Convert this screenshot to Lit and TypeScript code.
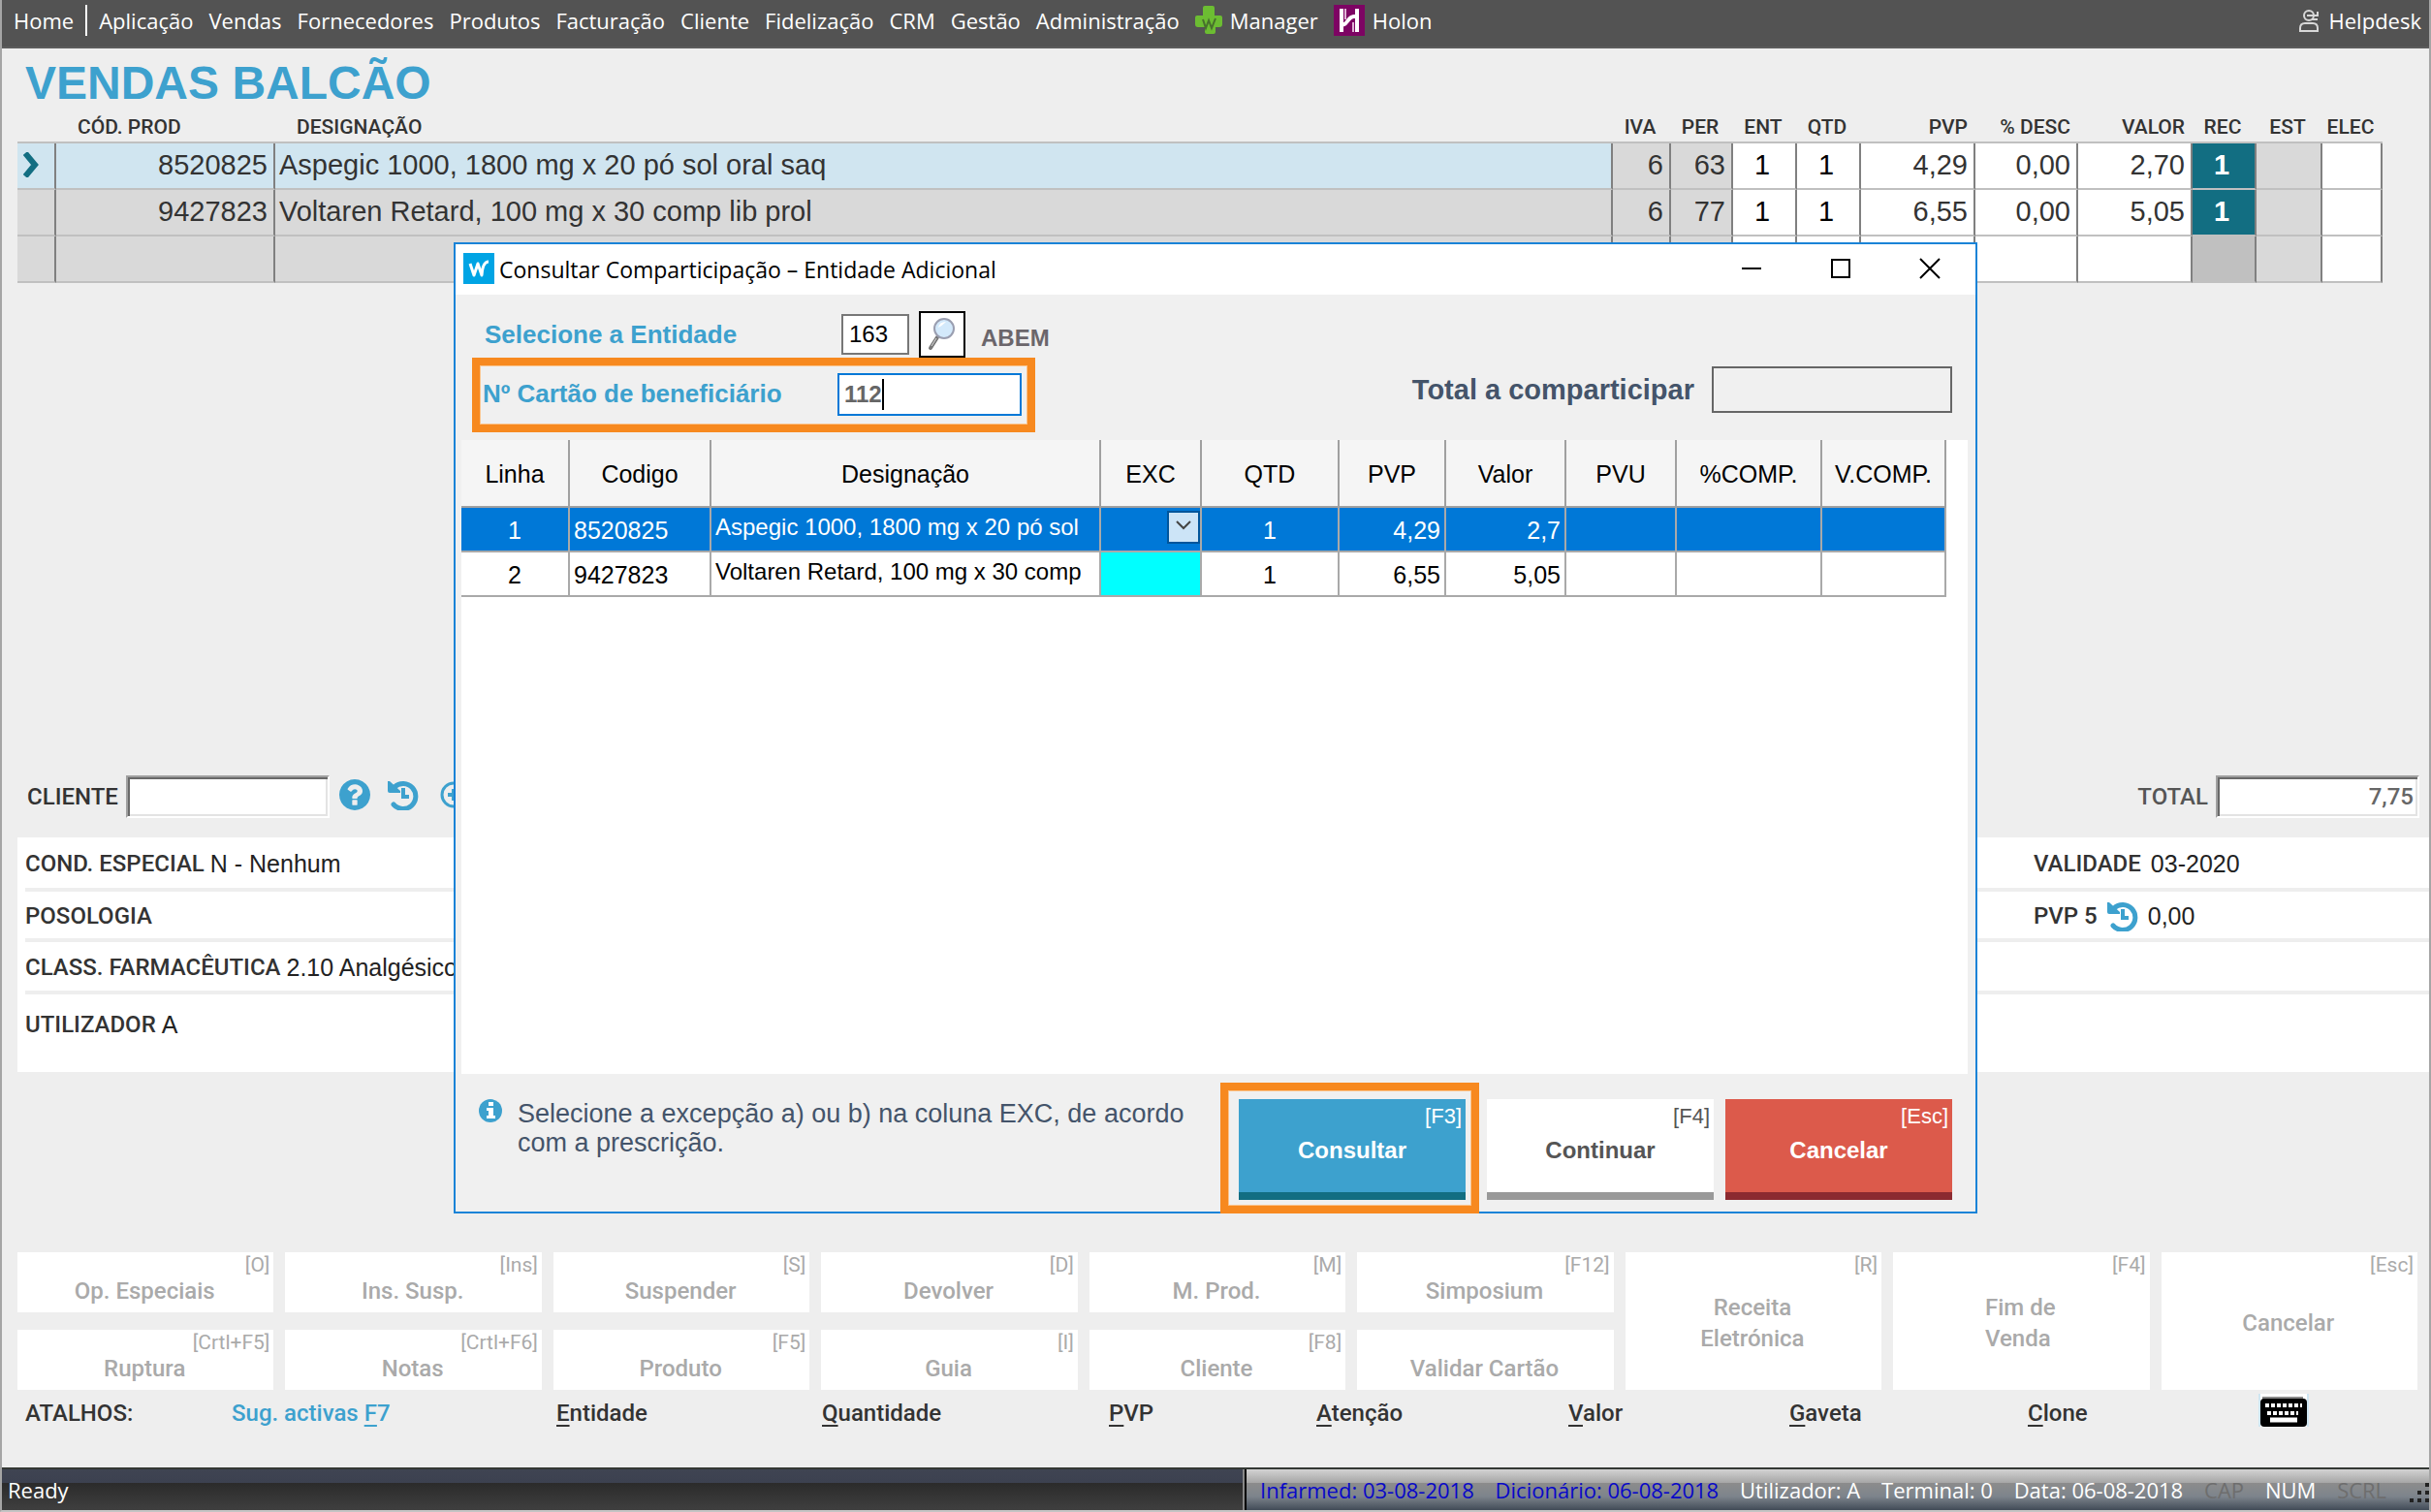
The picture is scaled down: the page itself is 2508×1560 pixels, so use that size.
import { LitElement, html, css, svg, nothing } from "lit";
import { customElement, state } from "lit/decorators.js";
import { classMap } from "lit/directives/class-map.js";

interface SaleLine {
  code: string;
  name: string;
  iva: string;
  per: string;
  ent: string;
  qtd: string;
  pvp: string;
  desc: string;
  valor: string;
  rec: string;
}

interface ActionKey {
  label: string;
  key: string;
  tall?: boolean;
}

const EMPTY_LINE: SaleLine = {
  code: "", name: "", iva: "", per: "", ent: "", qtd: "", pvp: "", desc: "", valor: "", rec: "",
};

const LINES: SaleLine[] = [
  { code: "8520825", name: "Aspegic 1000, 1800 mg x 20 pó sol oral saq", iva: "6", per: "63", ent: "1", qtd: "1", pvp: "4,29", desc: "0,00", valor: "2,70", rec: "1" },
  { code: "9427823", name: "Voltaren Retard, 100 mg x 30 comp lib prol", iva: "6", per: "77", ent: "1", qtd: "1", pvp: "6,55", desc: "0,00", valor: "5,05", rec: "1" },
  EMPTY_LINE,
];

const MENU = ["Aplicação", "Vendas", "Fornecedores", "Produtos", "Facturação", "Cliente", "Fidelização", "CRM", "Gestão", "Administração"];

const ACTIONS: ActionKey[] = [
  { label: "Op. Especiais", key: "[O]" },
  { label: "Ins. Susp.", key: "[Ins]" },
  { label: "Suspender", key: "[S]" },
  { label: "Devolver", key: "[D]" },
  { label: "M. Prod.", key: "[M]" },
  { label: "Simposium", key: "[F12]" },
  { label: "Receita\nEletrónica", key: "[R]", tall: true },
  { label: "Fim de\nVenda", key: "[F4]", tall: true },
  { label: "Cancelar", key: "[Esc]", tall: true },
  { label: "Ruptura", key: "[Crtl+F5]" },
  { label: "Notas", key: "[Crtl+F6]" },
  { label: "Produto", key: "[F5]" },
  { label: "Guia", key: "[I]" },
  { label: "Cliente", key: "[F8]" },
  { label: "Validar Cartão", key: "" },
];

const SHORTCUTS = ["Entidade", "Quantidade", "PVP", "Atenção", "Valor", "Gaveta", "Clone"];

const DIALOG_COLUMNS = ["Linha", "Codigo", "Designação", "EXC", "QTD", "PVP", "Valor", "PVU", "%COMP.", "V.COMP."];

const historyIcon = html`<svg class="icon32" viewBox="0 0 32 32" aria-hidden="true"><path d="M7 8A13 13 0 1 1 6 26" fill="none" stroke="currentColor" stroke-width="5" stroke-linecap="round" /><path d="M0 2h2l11 10v2H2q-2 0-2-2z" fill="currentColor" /><path d="M16 9v9h6" fill="none" stroke="currentColor" stroke-width="4" /></svg>`;

const questionIcon = html`<svg class="icon32" viewBox="128 128 1536 1536" aria-hidden="true">${svg`<path fill="currentColor" d="M1024 1376v-192q0-14-9-23t-23-9h-192q-14 0-23 9t-9 23v192q0 14 9 23t23 9h192q14 0 23-9t9-23zM1280 704q0-88-55.500-163t-138.500-116-170-41q-243 0-371 213-15 24 8 42l132 100q7 6 19 6 16 0 25-12 53-68 86-92 34-24 86-24 48 0 85.500 26t37.500 59q0 38-20 61t-68 45q-63 28-115.500 86.500t-52.500 125.500v36q0 14 9 23t23 9h192q14 0 23-9t9-23q0-19 21.500-49.500t54.500-49.500q32-18 49-28.500t46-35 44.500-48 28-60.500 12.500-81zM1664 896q0 209-103 385.500t-279.500 279.500-385.500 103-385.500-103-279.500-279.500-103-385.500 103-385.500 279.500-279.500 385.500-103 385.500 103 279.500 279.500 103 385.500z"/>`}</svg>`;

const plusIcon = html`<svg class="icon32" viewBox="0 0 32 32" aria-hidden="true"><circle cx="18" cy="16" r="12" fill="none" stroke="currentColor" stroke-width="3" /><path d="M18 10v12M12 16h12" stroke="currentColor" stroke-width="4" /></svg>`;

const infoIcon = html`<svg class="icon24" viewBox="0 0 24 24" aria-hidden="true"><circle cx="12" cy="12" r="12" fill="#3da1ce" /><path fill="#fff" d="M10 3h5v4h-5zM8 9h7v8h2v3H8v-3h2v-5H8z" /></svg>`;

const cloverIcon = html`<svg class="clover" viewBox="0 0 28 30" aria-hidden="true"><path fill="#6cbd32" d="M8 2q0-2 2-2h8q2 0 2 2v8h6q2 0 2 2v7q0 3-3 3h-4v5q0 2-2 2h-7q-2 0-2-2v-5H3q-3 0-3-3v-7q0-2 2-2h6z" /><path d="M8 14l3 9 3-8 3 8 4-10" fill="none" stroke="#47702c" stroke-width="2" /></svg>`;

const holonIcon = html`<svg class="icon32" viewBox="0 0 32 32" aria-hidden="true"><rect width="32" height="32" fill="#7d0463" /><path d="M8 4v24M24 4v24M8 18q2 5 6-1t10-5" fill="none" stroke="#fff" stroke-width="4" /><path d="M12 4v11M20 18v10" stroke="#e0b4d6" stroke-width="2" /></svg>`;

const personIcon = html`<svg class="person" viewBox="0 0 22 26" aria-hidden="true"><path d="M2 24v-3q0-5 5-5h8q5 0 5 5v3z" fill="none" stroke="#d8d8d8" stroke-width="2" /><circle cx="11" cy="8" r="5" fill="none" stroke="#d8d8d8" stroke-width="2" /><path d="M9 8h11V4M14 12h6" fill="none" stroke="#d8d8d8" stroke-width="2" /></svg>`;

const brandIcon = html`<svg class="icon32" viewBox="0 0 32 32" aria-hidden="true"><rect width="32" height="32" fill="#00a4e4" /><path d="M7 11l4 12 4-12 4 12q1-14 7-14" fill="none" stroke="#fff" stroke-width="3" stroke-linejoin="round" /></svg>`;

const lensIcon = html`<svg class="lens" viewBox="0 0 32 36" aria-hidden="true"><path d="M11 21L4 32" stroke="#777" stroke-width="4" stroke-linecap="round" /><path d="M10 22L5 30" stroke="#ddd" stroke-width="1" /><circle cx="18" cy="12" r="10" fill="#d3e9fb" stroke="#9a9eb0" stroke-width="2" /><path d="M12 11q1-6 8-6-4 4-8 6z" fill="#fff" /></svg>`;

const keyboardIcon = html`<svg class="keyboard" viewBox="0 0 52 34" aria-hidden="true"><rect width="52" height="34" fill="#fff" /><path d="M1 0v34M51 0v34" stroke="#cfe6f2" stroke-width="2" /><rect x="4" y="3" width="42" height="3" fill="#888" /><rect x="2" y="5" width="48" height="29" rx="4" /><path d="M7 12h38M9 20h32" stroke="#fff" stroke-width="4" stroke-dasharray="4 2" /><path d="M12 27h28" stroke="#fff" stroke-width="5" /></svg>`;

@customElement("app-root")
export class AppRoot extends LitElement {
  @state() private selected = 0;

  static styles = css`
    :host { display: block; }
    * { box-sizing: border-box; }
    button { font: inherit; color: inherit; background: none; border: 0; padding: 0; margin: 0; cursor: pointer; }
    a { color: inherit; text-decoration: none; }
    svg { display: block; flex: none; }
    input { font: inherit; border-radius: 0; margin: 0; outline: 0; min-width: 0; }
    .icon32 { width: 32px; height: 32px; }
    .icon24 { width: 24px; height: 24px; }

    .shell {
      position: relative;
      display: flex;
      flex-direction: column;
      min-height: 100vh;
      background: #eee;
      border-left: 2px solid #a5a5a5;
      border-right: 2px solid #a5a5a5;
      border-bottom: 2px solid #c4c4c4;
      color: #333;
      font-family: Roboto, "Liberation Sans", sans-serif;
      font-size: 24px;
      overflow: hidden;
    }

    .menu {
      display: flex;
      align-items: center;
      gap: 16px;
      height: 50px;
      padding: 0 8px 6px 12px;
      background: #535353;
      border-bottom: 2px solid #5c5c5c;
      color: #fff;
      font-family: "Open Sans", "Noto Sans", sans-serif;
      font-size: 22px;
      line-height: 30px;
    }
    .menu a { display: flex; align-items: center; gap: 8px; white-space: nowrap; }
    .menu .bar { width: 2px; height: 32px; background: #fff; margin: 0 -4px; }
    .menu .right { margin-left: auto; gap: 10px; }
    .clover { width: 28px; height: 30px; }
    .person { width: 22px; height: 26px; }

    .sale { padding: 8px 48px 0 16px; }
    h1 {
      margin: 0;
      padding-left: 8px;
      font: bold 48px/56px "Liberation Sans", Arial, sans-serif;
      color: #3da1ce;
    }
    .lines { width: 100%; table-layout: fixed; border-collapse: separate; border-spacing: 0; }
    .lines th {
      height: 34px;
      padding: 2px 8px 0;
      border-bottom: 2px solid #c0c0c0;
      font-size: 21px;
      line-height: 26px;
      font-weight: 500;
      text-align: center;
      white-space: nowrap;
    }
    .lines th.tight { padding: 2px 4px 0 0; }
    .lines td {
      height: 48px;
      padding: 0 6px 2px;
      background: #d9d9d9;
      border-right: 2px solid #808080;
      border-bottom: 2px solid #c0c0c0;
      font-family: "Liberation Sans", Arial, sans-serif;
      font-size: 29px;
      line-height: 34px;
      white-space: nowrap;
    }
    .lines .num { text-align: right; }
    .lines .mid { text-align: center; color: #000; padding-right: 10px; }
    .lines td.name { padding: 0 4px 2px; }
    .lines th.code { text-align: left; padding-left: 22px; }
    .lines th.name { text-align: left; padding-left: 22px; }
    .lines td.open { background: #fff; }
    .lines tr.current td.sel { background: #d0e5f0; }
    .lines td.rec { background: #c0c0c0; text-align: center; padding-right: 10px; }
    .lines td.rec.on { background: #126e82; color: #fff; font-weight: bold; }
    .c-mark { width: 40px; }
    .c-code { width: 226px; }
    .c-60 { width: 60px; }
    .c-62 { width: 62px; }
    .c-64 { width: 64px; }
    .c-66 { width: 66px; }
    .c-68 { width: 68px; }
    .c-106 { width: 106px; }
    .c-118 { width: 118px; }
    .arrow { width: 16px; height: 26px; }

    .client { display: flex; align-items: center; margin-top: auto; padding: 0 10px 0 26px; height: 44px; font-weight: 500; }
    .sunken {
      width: 210px;
      height: 44px;
      padding: 0 4px;
      background: #fff;
      border: 2px solid #a0a0a0;
      border-right-color: #fff;
      border-bottom-color: #fff;
      box-shadow: inset 2px 2px #696969, inset -2px -2px #e3e3e3;
      font-weight: 500;
      color: #666;
      text-align: right;
    }
    .client label { padding-right: 8px; }
    .client .tools { display: flex; gap: 18px; padding: 0 0 4px 10px; color: #3da1ce; }
    .client .total { margin-left: auto; display: flex; align-items: center; color: #555; }

    .details {
      display: grid;
      grid-template-rows: 56px 52px 54px 80px;
      margin: 20px 0 0 16px;
      padding-left: 8px;
      background: #fff;
    }
    .detail {
      display: grid;
      grid-template-columns: 2072px 1fr;
      align-items: center;
      padding-top: 2px;
      border-bottom: 4px solid #eee;
      line-height: 32px;
    }
    .detail.last { border-bottom: 0; padding: 0 0 18px; }
    .pair { display: flex; align-items: center; gap: 6px; }
    .pair.wide { gap: 10px; }
    .pair b { font-weight: 500; }
    .pair .val { font-size: 25px; font-weight: 400; color: #222; font-family: "Liberation Sans", Arial, sans-serif; }
    .pair svg { color: #3da1ce; }

    .actions {
      display: grid;
      grid-template-columns: repeat(9, 1fr);
      grid-auto-rows: 62px;
      gap: 18px 12px;
      margin: 186px 12px 0 16px;
      color: #aaa;
      font-weight: 500;
    }
    .act {
      display: flex;
      flex-direction: column;
      align-items: center;
      background: #fff;
      color: #aaa;
    }
    .act kbd {
      align-self: flex-end;
      height: 28px;
      padding-right: 4px;
      font: 21px/26px Roboto, sans-serif;
    }
    .act span { line-height: 24px; white-space: pre-line; text-align: left; padding-right: 2px; }
    .act.tall { grid-row: span 2; }
    .act.tall span { margin: auto; padding-bottom: 24px; line-height: 32px; }
    .act.centered span { text-align: center; }

    .shortcuts {
      display: grid;
      grid-template-columns: 213fr 335fr 274fr 296fr 214fr 260fr 228fr 246fr 238fr 176fr;
      align-items: start;
      height: 80px;
      padding: 4px 0 0 24px;
      font-weight: 500;
      line-height: 40px;
      white-space: nowrap;
    }
    .shortcuts .hot { color: #3da1ce; }
    .shortcuts u { text-underline-offset: 4px; }
    .keyboard { width: 52px; height: 34px; }

    .status {
      display: flex;
      height: 44px;
      border-top: 2px solid #343834;
      font-family: "Open Sans", "Noto Sans", sans-serif;
      font-size: 22px;
      line-height: 42px;
      color: #fff;
      white-space: nowrap;
    }
    .status .ready { width: 1282px; padding-left: 6px; background: linear-gradient(#3f4452, #3c4150 14px, #2b2b2b 14px, #3f3f3f); border-right: 2px solid #888; }
    .status .cells {
      flex: 1;
      display: flex;
      justify-content: space-between;
      padding: 0 0 0 14px;
      border-left: 2px solid #000;
      background: linear-gradient(#d2d2d2, #a6a6a6 14px, #8c8c8c 14px, #7d848c 28px, #414b57);
    }
    .status .blue { color: #0808c8; }
    .status .off { color: #6e6e6e; }
    .grip { width: 22px; height: 22px; align-self: flex-end; margin-bottom: 6px; }

    .dialog {
      position: absolute;
      left: 466px;
      top: 250px;
      width: 1572px;
      display: flex;
      flex-direction: column;
      height: 1002px;
      background: #f0f0f0;
      border: 2px solid #1a83d7;
      font-family: "Liberation Sans", Arial, sans-serif;
    }
    .titlebar {
      display: flex;
      align-items: center;
      gap: 5px;
      height: 52px;
      padding: 0 35px 2px 8px;
      background: #fff;
      color: #000;
      font-family: "Open Sans", "Noto Sans", sans-serif;
      font-size: 23px;
    }
    .titlebar h2 { margin: 0; font: inherit; padding-top: 2px; }
    .winctl { margin-left: auto; display: flex; gap: 68px; }
    .winctl svg { width: 24px; height: 24px; }

    .form { display: flex; justify-content: space-between; height: 150px; padding: 17px 24px 0 17px; }
    .form label { color: #3da1ce; font-weight: bold; font-size: 26px; }
    .entity { display: flex; align-items: center; height: 48px; padding-left: 13px; }
    .entity label { width: 368px; }
    .entity input { width: 70px; height: 42px; padding: 0 6px; border: 2px solid #777; background: #fff; color: #000; font-size: 24px; }
    .entity button { display: grid; place-items: center; width: 48px; height: 48px; margin: 0 16px 0 10px; background: #fff; border: 2px solid #000; }
    .lens { width: 32px; height: 36px; }
    .entity output { font-weight: bold; font-size: 24px; color: #6b666b; padding-top: 8px; }
    .ring { border: 8px solid #f7891f; outline: 1px solid #fbc48c; outline-offset: -9px; }
    .card { display: flex; align-items: center; width: 581px; height: 77px; padding: 0 6px 2px 3px; }
    .card label { width: 366px; }
    .card .field { position: relative; display: flex; }
    .card input { width: 190px; height: 44px; padding: 0 5px; border: 2px solid #0078d7; background: #fff; color: #666; font-weight: bold; font-size: 24px; }
    .caret { position: absolute; left: 46px; top: 6px; width: 2px; height: 32px; background: #000; }
    .share { display: flex; align-items: center; gap: 18px; height: 48px; margin-top: 57px; }
    .share label { font-size: 29px; color: #44546a; }
    .share input { width: 248px; height: 48px; border: 2px solid #666; background: transparent; }

    .sheet { flex: 1; margin: 0 8px 0 6px; background: #fff; }
    .grid { table-layout: fixed; width: 1532px; border-collapse: separate; border-spacing: 0; color: #000; font-size: 25px; line-height: 30px; }
    .grid th { height: 70px; padding: 2px 0 0; font-weight: normal; background: #f5f5f5; border-right: 2px solid #a0a0a0; border-bottom: 2px solid #a0a0a0; }
    .grid td { height: 46px; padding: 2px 4px 0; border-right: 2px solid #a9a9a9; border-bottom: 2px solid #a9a9a9; white-space: nowrap; overflow: hidden; }
    .grid .mid { text-align: center; }
    .grid .num { text-align: right; }
    .grid td.name { padding: 0 4px 4px; font-size: 24px; }
    .grid td.exc { padding: 0; vertical-align: top; }
    .grid tr.active td { background: #0078d7; color: #fff; }
    .grid tr.pending td.exc { background: #0ff; }
    .pick { position: relative; width: 34px; height: 34px; margin-left: auto; }
    .pick select { appearance: none; width: 34px; height: 34px; border: 2px solid #00559b; border-radius: 0; background: #cce4f7; }
    .pick svg { position: absolute; left: 8px; top: 12px; width: 18px; height: 12px; pointer-events: none; }
    .d-112 { width: 112px; }
    .d-146 { width: 146px; }
    .d-402 { width: 402px; }
    .d-104 { width: 104px; }
    .d-142 { width: 142px; }
    .d-110 { width: 110px; }
    .d-124 { width: 124px; }
    .d-114 { width: 114px; }
    .d-150 { width: 150px; }
    .d-128 { width: 128px; }

    .foot { display: flex; height: 142px; padding-right: 24px; }
    .hint { display: flex; gap: 16px; margin: 0 auto 0 24px; padding-top: 26px; width: 740px; }
    .hint p { margin: 0; font-size: 27px; line-height: 30px; color: #44546a; }
    .ring.wrap { align-self: flex-start; width: 267px; height: 135px; margin: 9px 8px 0 0; padding: 9px 6px 0 11px; }
    .cmd {
      display: flex;
      flex-direction: column;
      align-items: center;
      width: 234px;
      height: 104px;
      border-bottom: 8px solid #999;
      background: #fff;
      color: #555;
      font-weight: bold;
      font-size: 24px;
    }
    .cmd kbd { align-self: flex-end; padding-right: 4px; font: 22px/36px "Liberation Sans", Arial, sans-serif; }
    .cmd span { line-height: 34px; }
    .foot > .cmd { margin: 26px 0 0 12px; }
    .foot > .ring + .cmd { margin-left: 0; }
    .cmd.primary { background: #3da1ce; border-color: #126e82; color: #fff; }
    .cmd.danger { background: #dc5a4b; border-color: #8c2a30; color: #fff; }
  `;

  private renderLine(line: SaleLine, index: number) {
    return html`
      <tr class=${classMap({ current: index === this.selected })} @click=${() => (this.selected = index)}>
        <td class="sel">
          ${index === this.selected
            ? html`<svg class="arrow" viewBox="0 0 16 26"><path d="M2 1l10 12-10 12" fill="none" stroke="#126e82" stroke-width="6" /></svg>`
            : nothing}
        </td>
        <td class="num sel">${line.code}</td>
        <td class="name sel">${line.name}</td>
        <td class="num">${line.iva}</td>
        <td class="num">${line.per}</td>
        <td class="mid open">${line.ent}</td>
        <td class="mid open">${line.qtd}</td>
        <td class="num open">${line.pvp}</td>
        <td class="num open">${line.desc}</td>
        <td class="num open">${line.valor}</td>
        <td class=${classMap({ rec: true, on: line.rec !== "" })}>${line.rec}</td>
        <td></td>
        <td class="open"></td>
      </tr>
    `;
  }

  private renderAction(action: ActionKey) {
    const classes = { act: true, tall: !!action.tall, centered: action.label.startsWith("Receita") };
    return html`<button type="button" class=${classMap(classes)}><kbd>${action.key}</kbd><span>${action.label}</span></button>`;
  }

  private renderDialog() {
    return html`
      <section class="dialog" role="dialog" aria-labelledby="dialog-title">
        <header class="titlebar">
          ${brandIcon}
          <h2 id="dialog-title">Consultar Comparticipação – Entidade Adicional</h2>
          <div class="winctl">
            <button type="button" aria-label="Minimizar"><svg viewBox="0 0 24 24"><path d="M2 12h20" stroke="#000" stroke-width="2" /></svg></button>
            <button type="button" aria-label="Maximizar"><svg viewBox="0 0 24 24"><rect x="3" y="3" width="18" height="18" fill="none" stroke="#000" stroke-width="2" /></svg></button>
            <button type="button" aria-label="Fechar"><svg viewBox="0 0 24 24"><path d="M2 2l20 20M22 2L2 22" stroke="#000" stroke-width="2" /></svg></button>
          </div>
        </header>
        <div class="form">
          <div>
            <div class="entity">
              <label for="entity">Selecione a Entidade</label>
              <input id="entity" type="text" value="163" />
              <button type="button" aria-label="Pesquisar">${lensIcon}</button>
              <output for="entity">ABEM</output>
            </div>
            <div class="card ring">
              <label for="card">Nº Cartão de beneficiário</label>
              <div class="field"><input id="card" type="text" value="112" /><i class="caret"></i></div>
            </div>
          </div>
          <div class="share">
            <label for="share">Total a comparticipar</label>
            <input id="share" type="text" readonly />
          </div>
        </div>
        <div class="sheet">
          <table class="grid">
            <colgroup>
              <col class="d-112" /><col class="d-146" /><col class="d-402" /><col class="d-104" /><col class="d-142" />
              <col class="d-110" /><col class="d-124" /><col class="d-114" /><col class="d-150" /><col class="d-128" />
            </colgroup>
            <thead><tr>${DIALOG_COLUMNS.map((name) => html`<th scope="col">${name}</th>`)}</tr></thead>
            <tbody>
              <tr class="active">
                <td class="mid">1</td><td>8520825</td><td class="name">Aspegic 1000, 1800 mg x 20 pó sol</td>
                <td class="exc">
                  <div class="pick">
                    <select aria-label="EXC"><option></option></select>
                    <svg viewBox="0 0 18 12"><path d="M2 2l7 7 7-7" fill="none" stroke="#444" stroke-width="2" /></svg>
                  </div>
                </td>
                <td class="mid">1</td><td class="num">4,29</td><td class="num">2,7</td><td></td><td></td><td></td>
              </tr>
              <tr class="pending">
                <td class="mid">2</td><td>9427823</td><td class="name">Voltaren Retard, 100 mg x 30 comp</td>
                <td class="exc"></td>
                <td class="mid">1</td><td class="num">6,55</td><td class="num">5,05</td><td></td><td></td><td></td>
              </tr>
            </tbody>
          </table>
        </div>
        <footer class="foot">
          <div class="hint">${infoIcon}<p>Selecione a excepção a) ou b) na coluna EXC, de acordo com a prescrição.</p></div>
          <div class="ring wrap"><button type="button" class="cmd primary"><kbd>[F3]</kbd><span>Consultar</span></button></div>
          <button type="button" class="cmd"><kbd>[F4]</kbd><span>Continuar</span></button>
          <button type="button" class="cmd danger"><kbd>[Esc]</kbd><span>Cancelar</span></button>
        </footer>
      </section>
    `;
  }

  render() {
    return html`
      <div class="shell">
        <nav class="menu">
          <a href="#home">Home</a>
          <i class="bar"></i>
          ${MENU.map((item) => html`<a href="#menu">${item}</a>`)}
          <a href="#manager">${cloverIcon}Manager</a>
          <a href="#holon">${holonIcon}Holon</a>
          <a class="right" href="#helpdesk">${personIcon}Helpdesk</a>
        </nav>

        <main class="sale">
          <h1>VENDAS BALCÃO</h1>
          <table class="lines">
            <colgroup>
              <col class="c-mark" /><col class="c-code" /><col /><col class="c-60" /><col class="c-64" /><col class="c-66" /><col class="c-66" />
              <col class="c-118" /><col class="c-106" /><col class="c-118" /><col class="c-66" /><col class="c-68" /><col class="c-62" />
            </colgroup>
            <thead>
              <tr>
                <th></th>
                <th class="code" scope="col">CÓD. PROD</th>
                <th class="name" scope="col">DESIGNAÇÃO</th>
                <th class="tight" scope="col">IVA</th>
                <th class="tight" scope="col">PER</th>
                <th class="tight" scope="col">ENT</th>
                <th class="tight" scope="col">QTD</th>
                <th class="num" scope="col">PVP</th>
                <th class="num" scope="col">% DESC</th>
                <th class="num" scope="col">VALOR</th>
                <th class="tight" scope="col">REC</th>
                <th class="tight" scope="col">EST</th>
                <th class="tight" scope="col">ELEC</th>
              </tr>
            </thead>
            <tbody>${LINES.map((line, i) => this.renderLine(line, i))}</tbody>
          </table>
        </main>

        <div class="client">
          <label for="client">CLIENTE</label>
          <input id="client" class="sunken" type="text" />
          <div class="tools">
            <button type="button" aria-label="Ajuda">${questionIcon}</button>
            <button type="button" aria-label="Histórico">${historyIcon}</button>
            <button type="button" aria-label="Adicionar">${plusIcon}</button>
          </div>
          <div class="total">
            <label for="total">TOTAL</label>
            <input id="total" class="sunken" type="text" value="7,75" readonly />
          </div>
        </div>

        <section class="details">
          <div class="detail">
            <div class="pair"><b>COND. ESPECIAL</b><span class="val">N - Nenhum</span></div>
            <div class="pair wide"><b>VALIDADE</b><span class="val">03-2020</span></div>
          </div>
          <div class="detail">
            <div class="pair"><b>POSOLOGIA</b></div>
            <div class="pair wide"><b>PVP 5</b>${historyIcon}<span class="val">0,00</span></div>
          </div>
          <div class="detail">
            <div class="pair"><b>CLASS. FARMACÊUTICA</b><span class="val">2.10 Analgésicos</span></div>
          </div>
          <div class="detail last">
            <div class="pair"><b>UTILIZADOR</b><span class="val">A</span></div>
          </div>
        </section>

        <div class="actions">${ACTIONS.map((a) => this.renderAction(a))}</div>

        <nav class="shortcuts">
          <span>ATALHOS:</span>
          <a class="hot" href="#sug">Sug. activas <u>F</u>7</a>
          ${SHORTCUTS.map((s) => html`<a href="#atalho"><u>${s[0]}</u>${s.slice(1)}</a>`)}
          <button type="button" aria-label="Teclado">${keyboardIcon}</button>
        </nav>

        <footer class="status">
          <div class="ready">Ready</div>
          <div class="cells">
            <span class="blue">Infarmed: 03-08-2018</span>
            <span class="blue">Dicionário: 06-08-2018</span>
            <span>Utilizador: A</span>
            <span>Terminal: 0</span>
            <span>Data: 06-08-2018</span>
            <span class="off">CAP</span>
            <span>NUM</span>
            <span class="off">SCRL</span>
            <svg class="grip" viewBox="0 0 22 22"><path d="M18 2h4M10 10h4M18 10h4M2 18h4M10 18h4M18 18h4" stroke="#222" stroke-width="4" /></svg>
          </div>
        </footer>

        ${this.renderDialog()}
      </div>
    `;
  }
}
